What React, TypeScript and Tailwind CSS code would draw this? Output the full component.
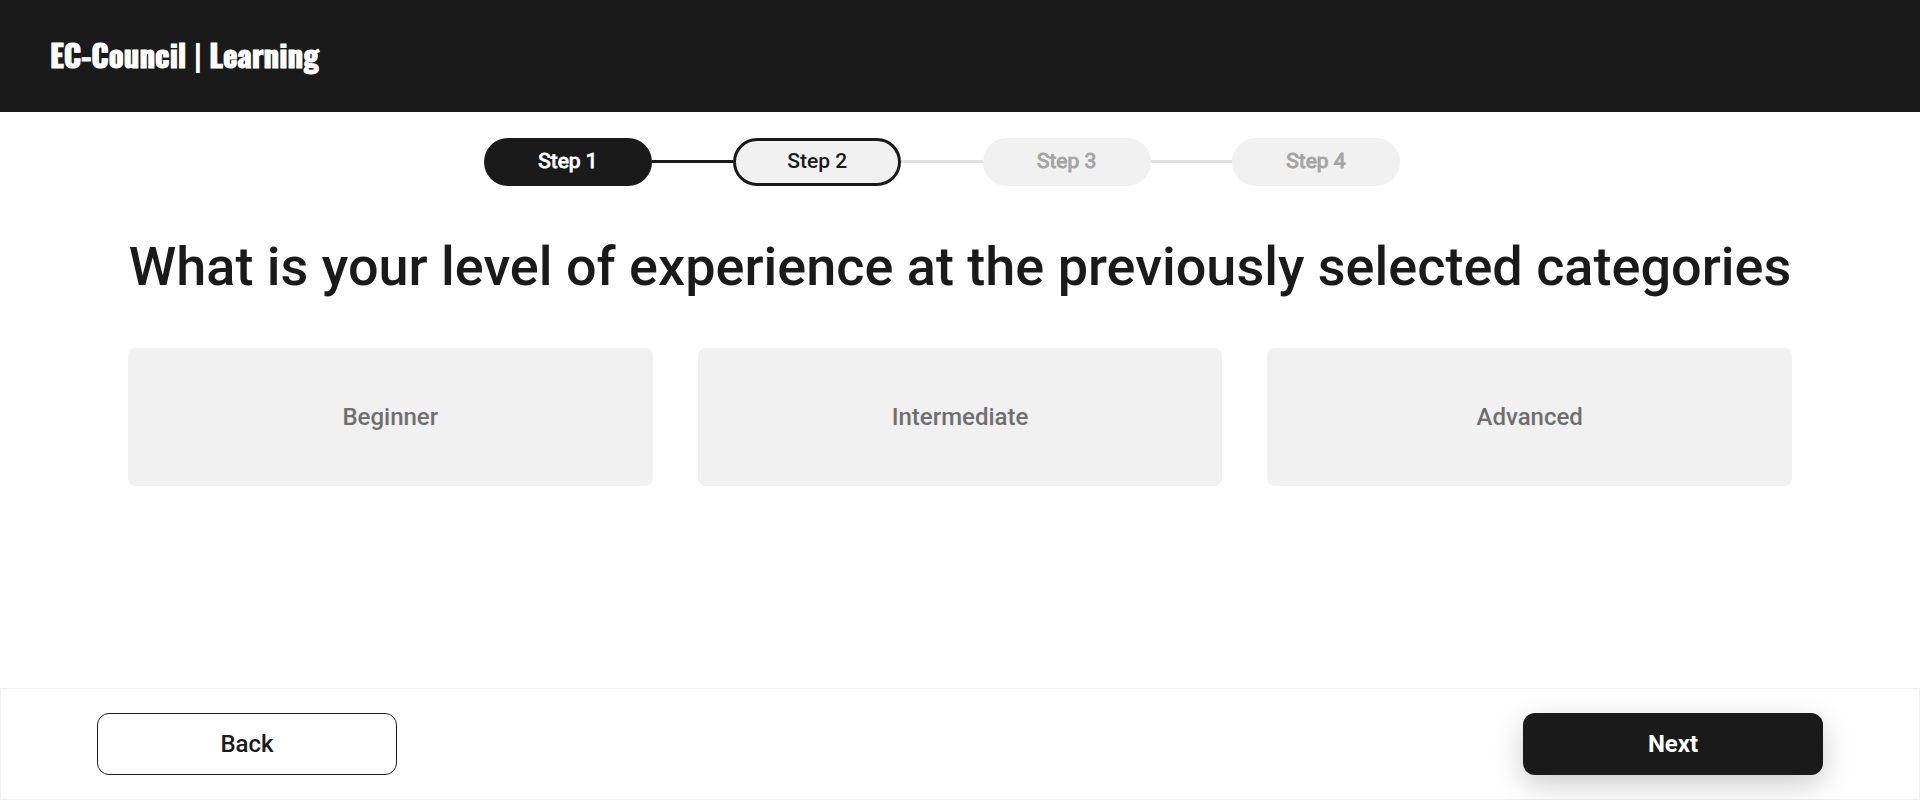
type StepState = "done" | "current" | "upcoming";

const steps: { label: string; state: StepState }[] = [
  { label: "Step 1", state: "done" },
  { label: "Step 2", state: "current" },
  { label: "Step 3", state: "upcoming" },
  { label: "Step 4", state: "upcoming" },
];

const pill: Record<StepState, string> = {
  done: "bg-[#1a1a1b] text-white [-webkit-text-stroke:1px]",
  current: "border-3 border-[#1a1a1b] bg-[#f1f1f1] text-[#1a1a1b] font-medium",
  upcoming: "bg-[#f1f1f1] text-[#a5a5a5] [-webkit-text-stroke:1px]",
};

const levels = ["Beginner", "Intermediate", "Advanced"];

function Stepper() {
  return (
    <div className="flex justify-center pr-9">
      <ol className="flex w-full max-w-[916px] items-center">
        {steps.map((step, i) => (
          <li key={step.label} className={i > 0 ? "flex flex-1 items-center" : "flex items-center"}>
            {i > 0 && (
              <span className={`mb-px h-[3px] flex-1 ${i === 1 ? "bg-[#1a1a1b]" : "bg-[#e2e2e2]"}`} />
            )}
            <span
              aria-current={step.state === "current" ? "step" : undefined}
              className={`flex h-12 w-[168px] items-center justify-center rounded-full text-[21px] ${pill[step.state]}`}
            >
              {step.label}
            </span>
          </li>
        ))}
      </ol>
    </div>
  );
}

export default function App() {
  return (
    <div className="flex min-h-screen flex-col bg-white font-['Roboto',sans-serif] text-[#1a1a1b]">
      <header className="flex h-28 items-center bg-[#1a1a1b] px-[50px] pb-1">
        <a
          href="#"
          className="font-['Oswald','Roboto_Condensed','Roboto',sans-serif] text-[31px] font-bold whitespace-nowrap text-white"
        >
          <span className="[-webkit-text-stroke:1px]">EC-Council</span>
          <span className="font-medium"> | </span>
          <span className="[-webkit-text-stroke:1px]">Learning</span>
        </a>
      </header>

      <main className="flex flex-1 flex-col px-32 pt-[26px]">
        <Stepper />
        <h1 className="mt-[49px] text-center text-[54px] leading-[64px] font-medium">
          What is your level of experience at the previously selected categories
        </h1>
        <div className="mt-[49px] grid grid-cols-3 gap-[45px]">
          {levels.map((level) => (
            <button
              key={level}
              type="button"
              className="h-[138px] rounded-lg bg-[#f1f1f1] text-2xl font-medium text-[#6f6f6f]"
            >
              {level}
            </button>
          ))}
        </div>
      </main>

      <footer className="flex items-center justify-between border border-[#f1f1f1] px-24 py-6">
        <button
          type="button"
          className="h-[62px] w-[300px] rounded-xl border border-[#1a1a1b] bg-white text-2xl font-medium"
        >
          Back
        </button>
        <button
          type="button"
          className="h-[62px] w-[300px] rounded-xl bg-[#1a1a1b] text-2xl font-bold text-white shadow-[0_10px_30px_rgba(0,0,0,0.2)]"
        >
          Next
        </button>
      </footer>
    </div>
  );
}
